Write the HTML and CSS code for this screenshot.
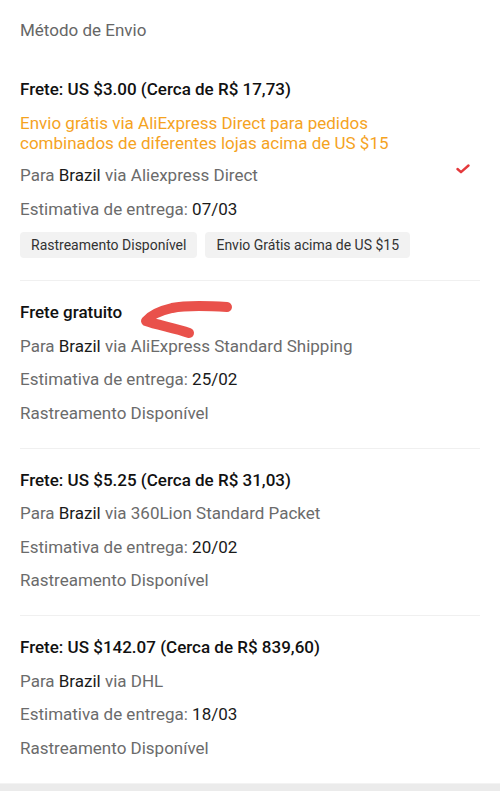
FILE: index.html
```html
<!DOCTYPE html>
<html lang="pt-BR">
<head>
  <meta charset="UTF-8" />
  <meta name="viewport" content="width=device-width, initial-scale=1.0"/>
  <title>Método de Envio</title>
  <link rel="stylesheet" href="styles.css">
</head>
<body>

  <div class="shipping">
    <div class="shipping-title">Método de Envio</div>

    <div class="option option-first">
      <div class="option-body">
        <div class="option-price">Frete: US $3.00 (Cerca de R$ 17,73)</div>
        <div class="option-note">Envio grátis via AliExpress Direct para pedidos combinados de diferentes lojas acima de US $15</div>
        <div class="option-line">Para <span class="strong">Brazil</span> via Aliexpress Direct</div>
        <div class="option-line">Estimativa de entrega: <span class="strong">07/03</span></div>
        <div class="tags">
          <span class="tag">Rastreamento Disponível</span>
          <span class="tag">Envio Grátis acima de US $15</span>
        </div>
      </div>
      <svg class="check" width="14" height="10" viewBox="0 0 14 10">
        <path d="M1.5 5 L5 8.2 L12.5 1.5" fill="none" stroke="#e4393c" stroke-width="2.4" stroke-linecap="round" stroke-linejoin="round"/>
      </svg>
    </div>

    <div class="option option-marked">
      <div class="option-body">
        <div class="option-price">Frete gratuito</div>
        <div class="option-line">Para <span class="strong">Brazil</span> via AliExpress Standard Shipping</div>
        <div class="option-line">Estimativa de entrega: <span class="strong">25/02</span></div>
        <div class="option-line">Rastreamento Disponível</div>
      </div>
      <!-- hand drawn annotation -->
      <svg class="arrow" width="105" height="45" viewBox="0 0 105 45">
        <path d="M92 11 C75 10 52 9 37 12 C24 15 15 20 11 25 C22 29 40 32 54 37" fill="none" stroke="#e9514b" stroke-width="10" stroke-linecap="round" stroke-linejoin="round"/>
      </svg>
    </div>

    <div class="option">
      <div class="option-body">
        <div class="option-price">Frete: US $5.25 (Cerca de R$ 31,03)</div>
        <div class="option-line">Para <span class="strong">Brazil</span> via 360Lion Standard Packet</div>
        <div class="option-line">Estimativa de entrega: <span class="strong">20/02</span></div>
        <div class="option-line">Rastreamento Disponível</div>
      </div>
    </div>

    <div class="option">
      <div class="option-body">
        <div class="option-price">Frete: US $142.07 (Cerca de R$ 839,60)</div>
        <div class="option-line">Para <span class="strong">Brazil</span> via DHL</div>
        <div class="option-line">Estimativa de entrega: <span class="strong">18/03</span></div>
        <div class="option-line">Rastreamento Disponível</div>
      </div>
    </div>
  </div>

  <div class="bottom-bar"></div>

</body>
</html>
```

FILE: styles.css
```css
html, body {
  margin: 0;
  background: #fff;
  font-family: Roboto, "Noto Sans", Arial, sans-serif;
  font-size: 17px;
  color: #666;
}

.shipping {
  padding: 0 20px;
}

.shipping-title {
  padding-top: 19px;
  line-height: 22px;
  color: #666;
}

.option {
  display: flex;
  align-items: center;
  padding: 21px 0 24px;
  border-top: 1px solid #f0f0f0;
}

.option-first {
  border-top: none;
  padding-top: 38px;
  padding-bottom: 22px;
}

.option-marked {
  position: relative;
}

.option-body {
  display: flex;
  flex-direction: column;
  gap: 12.5px;
  flex: 1;
}

.option-price {
  line-height: 21px;
  font-weight: 500;
  color: #111;
}

.option-note {
  max-width: 400px;
  line-height: 20px;
  color: #f5a31f;
}

.option-line {
  line-height: 21px;
  color: #6b6b6b;
}

.strong {
  color: #1a1a1a;
}

.tags {
  display: flex;
  gap: 8px;
}

.tag {
  background: #f2f2f2;
  border-radius: 4px;
  padding: 0 11px;
  line-height: 26px;
  font-size: 14px;
  color: #333;
}

.check {
  margin-right: 10px;
}

.arrow {
  position: absolute;
  left: 115px;
  top: 15px;
}

.bottom-bar {
  height: 9px;
  background: #ebebeb;
  border-top: 1px solid #f3f3f3;
}
```
